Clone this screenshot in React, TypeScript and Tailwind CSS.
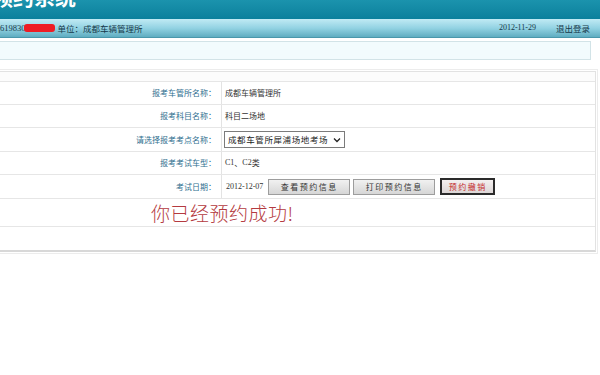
import React from 'react';

const cjk = { fontFamily: '"Noto Sans CJK SC", "Noto Sans", sans-serif' };
const serif = { fontFamily: '"Liberation Serif", serif' };

const rows = [
  { label: '报考车管所名称：', value: '成都车辆管理所', h: 'h-[23px]' },
  { label: '报考科目名称：', value: '科目二场地', h: 'h-[23px]' },
];

const Label: React.FC<{ text: string }> = ({ text }) => (
  <div className="w-[223px] shrink-0 h-full flex items-center justify-end pr-[5px] border-r border-[#e3e3e3] text-[8px] text-[#2f6f8f]">
    {text}
  </div>
);

const GreyButton: React.FC<{ text: string }> = ({ text }) => (
  <button className="h-[16px] w-[82px] border border-[#9d9d9d] bg-gradient-to-b from-[#f1f1f1] to-[#d6d6d6] text-[8px] text-[#333] tracking-[1.5px] leading-none">
    {text}
  </button>
);

export default function App() {
  return (
    <div className="w-[600px] h-[375px] overflow-hidden bg-white" style={cjk}>
      {/* top banner, title cut off by the crop */}
      <div className="h-[19px] overflow-hidden bg-gradient-to-b from-[#1b93ad] to-[#0a809c]">
        <div className="-mt-[14px] -ml-[8px] text-[21px] font-bold text-white leading-none whitespace-nowrap">
          预约系统
        </div>
      </div>

      {/* user info bar */}
      <div className="h-[19px] flex items-center justify-between bg-gradient-to-b from-[#c0eaf4] via-[#93d3e3] to-[#5fadc1] border-b border-[#4a97ab] text-[8.5px] text-[#15384a]">
        <div className="flex items-center">
          <span style={serif}>619830</span>
          <span className="inline-block w-[31px] h-[8px] bg-[#ee1c24] rounded-[3px] -ml-[2px]" />
          <span className="ml-[3px]">单位：成都车辆管理所</span>
        </div>
        <div className="flex items-center pr-[10px]">
          <span className="text-[8px]" style={serif}>2012-11-29</span>
          <span className="ml-[20px]">退出登录</span>
        </div>
      </div>

      {/* notice box */}
      <div className="mt-[3px] -ml-[2px] mr-[9px] h-[19px] bg-[#f2fbfd] border border-[#d2e3e7]" />

      {/* form table */}
      <div className="mt-[11px] -ml-[2px] mr-[4px] border border-[#e2e2e2] border-b-2 border-b-[#d8d8d8] outline outline-1 outline-offset-[1px] outline-[#ececec]">
        <div className="h-[10px] border-b border-[#e6e6e6] bg-[#fcfcfc]" />
        {rows.map((r) => (
          <div key={r.label} className={`${r.h} flex border-b border-[#e6e6e6]`}>
            <Label text={r.label} />
            <div className="flex items-center pl-[3px] text-[8px] text-[#333]">{r.value}</div>
          </div>
        ))}
        <div className="h-[24px] flex border-b border-[#e6e6e6]">
          <Label text="请选择报考考点名称：" />
          <div className="flex items-center pl-[2px]">
            <div className="h-[17px] w-[121px] border border-[#7b7b7b] bg-white flex items-center justify-between pl-[3px] pr-[3px] text-[8.5px] text-[#222] tracking-[0.6px]">
              <span>成都车管所犀浦场地考场</span>
              <svg width="8" height="6" viewBox="0 0 8 6">
                <path d="M1 1.5 L4 4.5 L7 1.5" fill="none" stroke="#222" strokeWidth="1.3" />
              </svg>
            </div>
          </div>
        </div>
        <div className="h-[23px] flex border-b border-[#e6e6e6]">
          <Label text="报考考试车型：" />
          <div className="flex items-center pl-[3px] text-[8px] text-[#333]">
            <span style={serif}>C1</span>
            <span>、</span>
            <span style={serif}>C2</span>
            <span>类</span>
          </div>
        </div>
        <div className="h-[24px] flex border-b border-[#e6e6e6]">
          <Label text="考试日期：" />
          <div className="flex items-center pl-[4px] gap-[3px]">
            <span className="text-[8px] text-[#333] mr-[2px]" style={serif}>
              2012-12-07
            </span>
            <GreyButton text="查看预约信息" />
            <GreyButton text="打印预约信息" />
            <button className="ml-[2px] h-[17px] w-[55px] border-2 border-[#2b2b2b] bg-gradient-to-b from-[#f4f0f0] to-[#dcd6d6] text-[8px] text-[#c42a2a] tracking-[1.5px] leading-none">
              预约撤销
            </button>
          </div>
        </div>
        <div className="h-[28px] flex items-center border-b border-[#e6e6e6] pl-[152px]">
          <span className="text-[19px] font-light text-[#b43a40] leading-none tracking-[0.5px]">你已经预约成功!</span>
        </div>
        <div className="h-[23px]" />
      </div>
    </div>
  );
}
